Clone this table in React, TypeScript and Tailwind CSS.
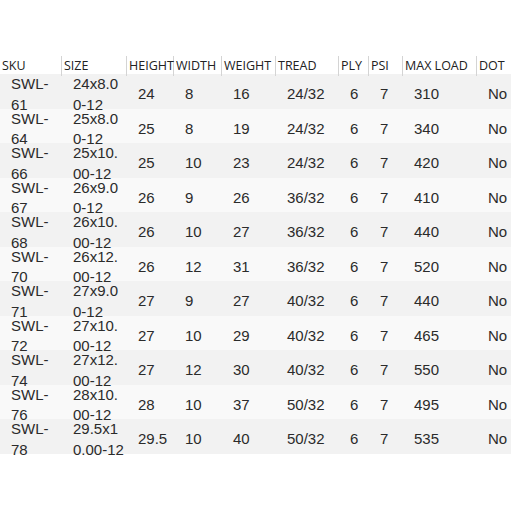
const headers = ['SKU', 'SIZE', 'HEIGHT', 'WIDTH', 'WEIGHT', 'TREAD', 'PLY', 'PSI', 'MAX LOAD', 'DOT'];

const rows: string[][] = [
  ['SWL-61', '24x8.00-12', '24', '8', '16', '24/32', '6', '7', '310', 'No'],
  ['SWL-64', '25x8.00-12', '25', '8', '19', '24/32', '6', '7', '340', 'No'],
  ['SWL-66', '25x10.00-12', '25', '10', '23', '24/32', '6', '7', '420', 'No'],
  ['SWL-67', '26x9.00-12', '26', '9', '26', '36/32', '6', '7', '410', 'No'],
  ['SWL-68', '26x10.00-12', '26', '10', '27', '36/32', '6', '7', '440', 'No'],
  ['SWL-70', '26x12.00-12', '26', '12', '31', '36/32', '6', '7', '520', 'No'],
  ['SWL-71', '27x9.00-12', '27', '9', '27', '40/32', '6', '7', '440', 'No'],
  ['SWL-72', '27x10.00-12', '27', '10', '29', '40/32', '6', '7', '465', 'No'],
  ['SWL-74', '27x12.00-12', '27', '12', '30', '40/32', '6', '7', '550', 'No'],
  ['SWL-76', '28x10.00-12', '28', '10', '37', '50/32', '6', '7', '495', 'No'],
  ['SWL-78', '29.5x10.00-12', '29.5', '10', '40', '50/32', '6', '7', '535', 'No'],
];

const cols = 'grid grid-cols-[62px_65px_47px_48px_54px_63px_30px_34px_74px_34px]';

export default function App() {
  return (
    <div className="h-[511px] w-[511px] bg-white pt-[56px]">
      {/* header */}
      <div className={`${cols} h-[18px] font-['Open_Sans',sans-serif] text-[12.5px] text-[#222]`}>
        {headers.map((h, i) => (
          <div
            key={h}
            className={`flex items-center whitespace-nowrap pl-[2px] pt-[1px] ${
              i < headers.length - 1 ? 'border-r border-[#d4d4d4]' : ''
            }`}
          >
            {h}
          </div>
        ))}
      </div>

      {/* body */}
      {rows.map((r, ri) => (
        <div
          key={r[0]}
          className={`${cols} h-[34.5px] font-['Liberation_Sans',Arial,sans-serif] text-[15px] leading-[20.5px] text-[#2b2b2b] ${
            ri % 2 === 0 ? 'bg-[#f2f2f2]' : 'bg-[#f9f9f9]'
          }`}
        >
          {r.map((c, ci) => (
            <div key={ci} className={`flex items-center pl-[11px] ${ci === 1 ? '' : 'pr-[6px]'}`}>
              <span className={ci === 1 ? 'block w-[52px] break-all' : 'block w-full'}>{c}</span>
            </div>
          ))}
        </div>
      ))}
    </div>
  );
}
